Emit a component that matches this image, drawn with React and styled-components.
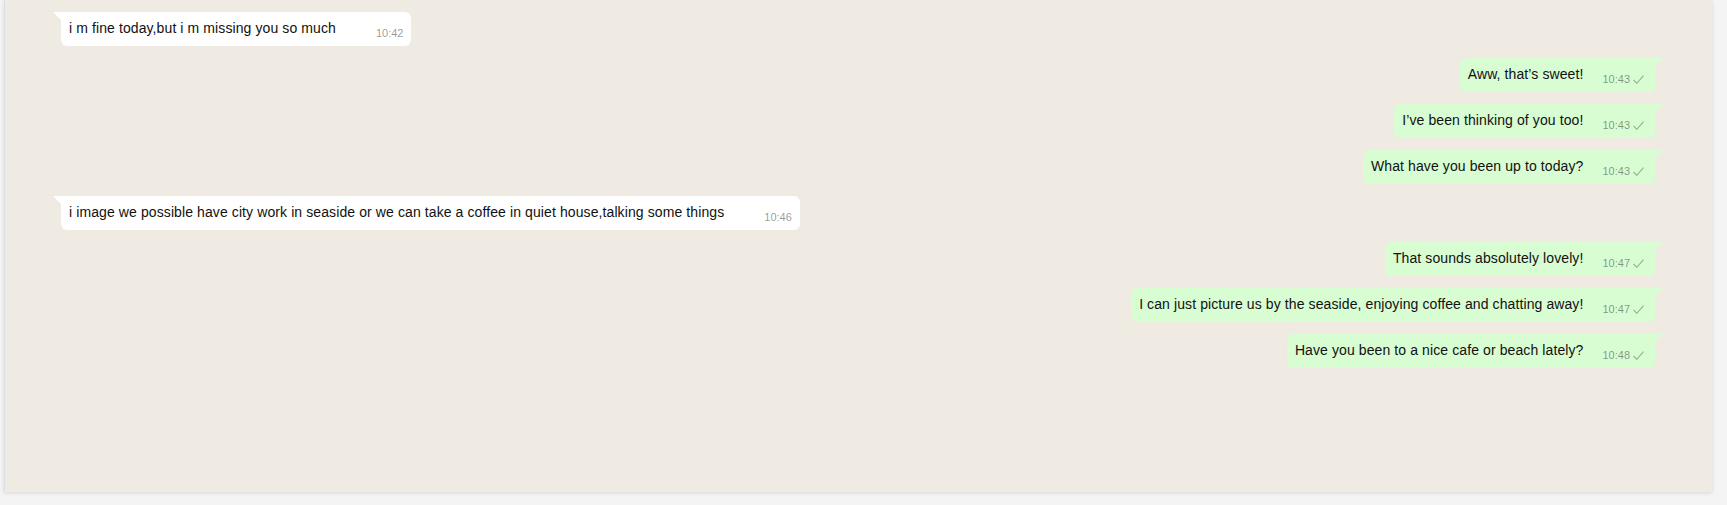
import React from "react";
import styled, { createGlobalStyle } from "styled-components";

const MESSAGES = [
  { id: 1, fromMe: false, text: "i m fine today,but i m missing you so much", time: "10:42" },
  { id: 2, fromMe: true, text: "Aww, that’s sweet!", time: "10:43" },
  { id: 3, fromMe: true, text: "I’ve been thinking of you too!", time: "10:43" },
  { id: 4, fromMe: true, text: "What have you been up to today?", time: "10:43" },
  {
    id: 5,
    fromMe: false,
    text: "i image we possible have city work in seaside or we can take a coffee in quiet house,talking some things",
    time: "10:46",
  },
  { id: 6, fromMe: true, text: "That sounds absolutely lovely!", time: "10:47" },
  {
    id: 7,
    fromMe: true,
    text: "I can just picture us by the seaside, enjoying coffee and chatting away!",
    time: "10:47",
  },
  { id: 8, fromMe: true, text: "Have you been to a nice cafe or beach lately?", time: "10:48" },
];

const GlobalStyle = createGlobalStyle`
  * { box-sizing: border-box; }
  body {
    margin: 0;
    background: #f4f4f4;
    font-family: "Liberation Sans", Arial, sans-serif;
  }
`;

const Check = () => (
  <svg width="11" height="9" viewBox="0 0 11 9" fill="none">
    <path d="M0.6 5 L3.8 8.3 L10.5 0.6" stroke="currentColor" strokeWidth="1.1" />
  </svg>
);

const Message = ({ message }) => (
  <Row $fromMe={message.fromMe}>
    <Bubble $fromMe={message.fromMe}>
      <Text>{message.text}</Text>
      <Meta $fromMe={message.fromMe}>
        <Time>{message.time}</Time>
        {message.fromMe && (
          <Tick>
            <Check />
          </Tick>
        )}
      </Meta>
    </Bubble>
  </Row>
);

export default function App() {
  return (
    <>
      <GlobalStyle />
      <Screen>
        <ChatPanel>
          <MessageList>
            {MESSAGES.map((m) => (
              <Message key={m.id} message={m} />
            ))}
          </MessageList>
        </ChatPanel>
      </Screen>
    </>
  );
}

const Screen = styled.div`
  height: 505px;
  width: 1727px;
  padding-left: 4px;
  overflow: hidden;
`;

const ChatPanel = styled.main`
  width: 1708px;
  height: 492px;
  background: #efeae2;
  border-left: 1px solid #d9dee8;
  box-shadow: 0 1px 4px rgba(0, 0, 0, 0.12);
`;

const MessageList = styled.div`
  display: flex;
  flex-direction: column;
  gap: 12px;
  padding: 12px 57px 0 56px;
`;

const Row = styled.div`
  display: flex;
  justify-content: ${(p) => (p.$fromMe ? "flex-end" : "flex-start")};
`;

const Bubble = styled.div`
  position: relative;
  display: flex;
  align-items: flex-end;
  max-width: 65%;
  padding: ${(p) => (p.$fromMe ? "6px 11px 8px 8px" : "6px 8px 8px 8px")};
  background: ${(p) => (p.$fromMe ? "#d9fdd3" : "#ffffff")};
  border-radius: ${(p) => (p.$fromMe ? "6px 0 6px 6px" : "0 6px 6px 6px")};

  &::before {
    content: "";
    position: absolute;
    top: 0;
    ${(p) => (p.$fromMe ? "right: -8px;" : "left: -8px;")}
    width: 8px;
    height: 8px;
    background: inherit;
    clip-path: ${(p) =>
      p.$fromMe
        ? "polygon(0 0, 100% 0, 0 100%)"
        : "polygon(0 0, 100% 0, 100% 100%)"};
  }
`;

const Text = styled.span`
  font-size: 14px;
  line-height: 20px;
  letter-spacing: 0.1px;
  color: #111;
  white-space: nowrap;
`;

const Meta = styled.span`
  display: flex;
  align-items: flex-end;
  gap: 3px;
  margin-left: ${(p) => (p.$fromMe ? "19px" : "40px")};
  flex-shrink: 0;
`;

const Time = styled.span`
  font-size: 11px;
  line-height: 11px;
  margin-bottom: -1px;
  color: rgba(0, 0, 0, 0.42);
`;

const Tick = styled.span`
  display: flex;
  color: rgba(0, 0, 0, 0.3);
`;
